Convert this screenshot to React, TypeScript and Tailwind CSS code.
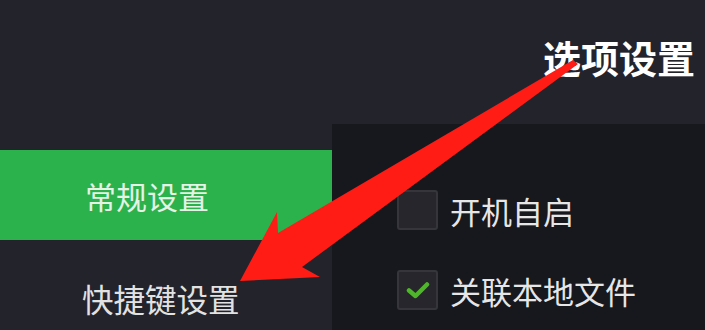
// Options dialog: left menu, right checkbox panel, red annotation arrow
const font = { fontFamily: '"Noto Sans CJK SC", "Noto Sans", sans-serif' };

function CheckBox({ checked }: { checked?: boolean }) {
  return (
    <div className="w-[41px] h-[40px] rounded-[3px] bg-[#26262c] border-2 border-[#35353b] flex items-center justify-center">
      {checked && (
        <svg width="24" height="18" viewBox="0 0 24 18">
          <path d="M3 9.5 L9.5 15 L21 3.5" fill="none" stroke="#4fb52a" strokeWidth="4.5" strokeLinecap="round" strokeLinejoin="round" />
        </svg>
      )}
    </div>
  );
}

function Option({ label, checked }: { label: string; checked?: boolean }) {
  return (
    <div className="flex items-center gap-[12px] h-[40px]">
      <CheckBox checked={checked} />
      <span className="text-[31px] leading-none text-[#e6e6e6]">{label}</span>
    </div>
  );
}

export default function App() {
  return (
    <div className="relative w-[705px] h-[330px] overflow-hidden bg-[#23232c] flex flex-col" style={font}>
      <div className="h-[124px] flex justify-end pr-[10px] pt-[38px]">
        <h1 className="text-[38px] leading-none font-bold text-white">选项设置</h1>
      </div>
      <div className="flex flex-1">
        <div className="w-[332px] pt-[26px] flex flex-col">
          <div className="h-[90px] bg-[#2bb24c] flex items-center pl-[85px]">
            <span className="text-[31px] leading-none text-[#e4f3e6]">常规设置</span>
          </div>
          <div className="pl-[82px] pt-[43px]">
            <span className="text-[31.5px] leading-none text-[#e2e2e2]">快捷键设置</span>
          </div>
        </div>
        <div className="flex-1 bg-[#17171e] pl-[65px] pt-[66px] flex flex-col gap-[40px]">
          <Option label="开机自启" />
          <Option label="关联本地文件" checked />
        </div>
      </div>
      {/* annotation arrow */}
      <svg className="absolute inset-0 pointer-events-none" width="705" height="330" viewBox="0 0 705 330">
        <polygon
          points="573,60 578,64 302,267 320,277 240,281 277,212 278,233"
          fill="#ff1c14"
        />
      </svg>
    </div>
  );
}
